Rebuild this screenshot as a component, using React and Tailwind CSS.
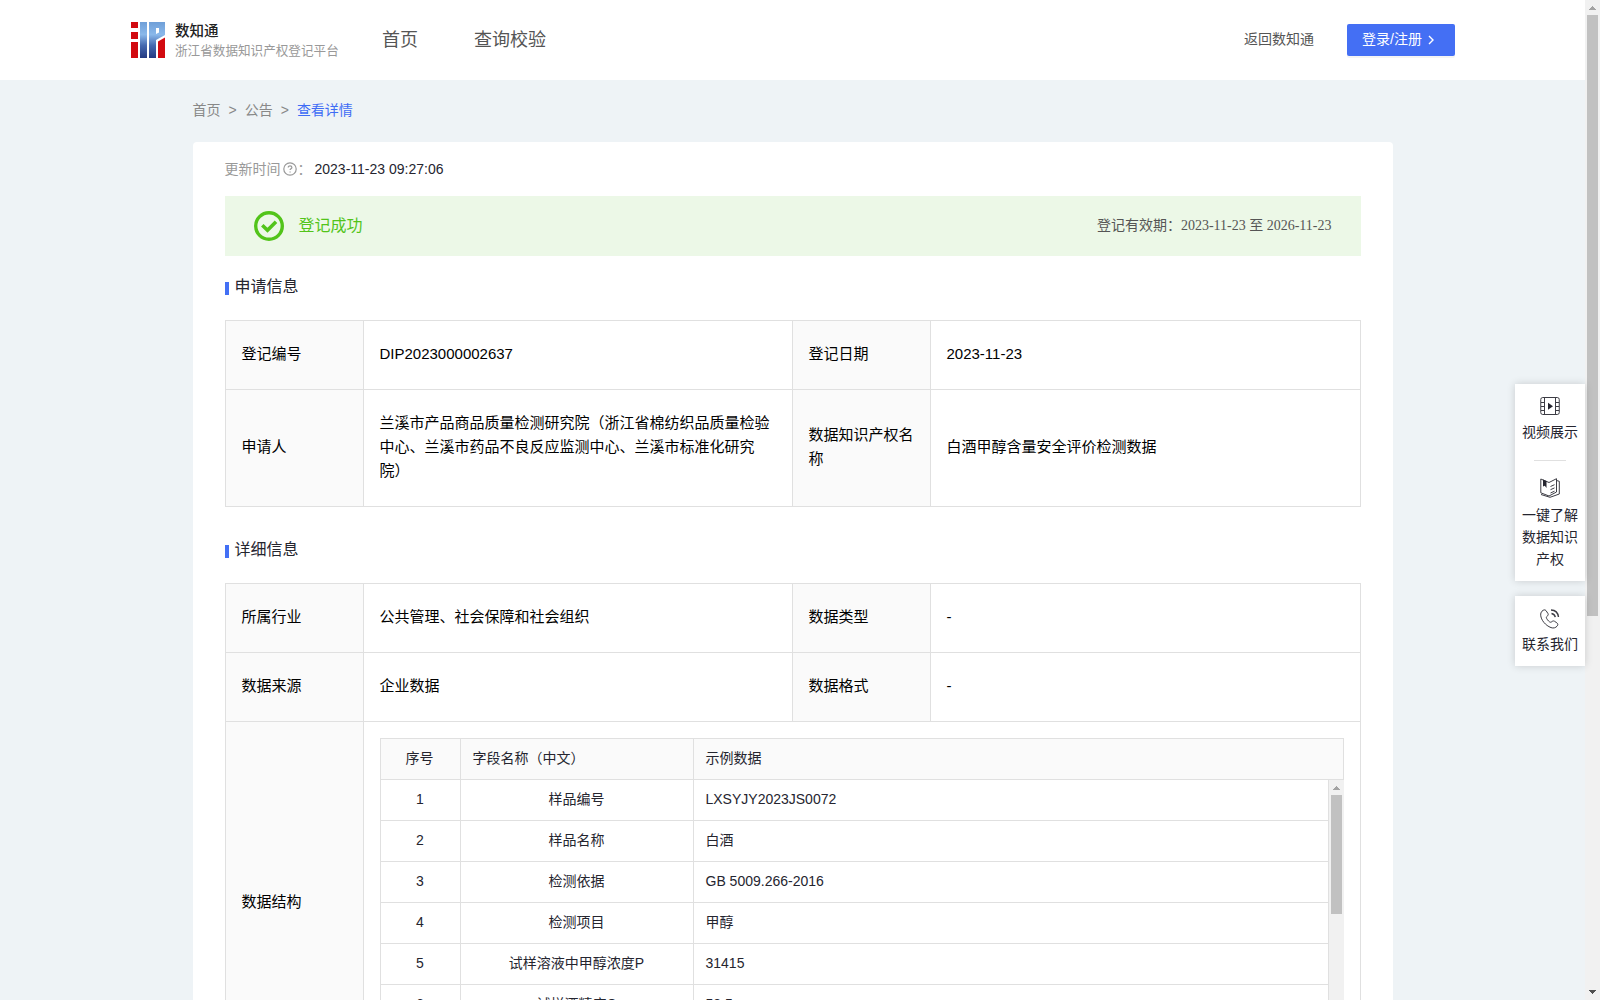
const cjk = "font-['Liberation_Sans','Noto_Sans_CJK_SC',sans-serif]";

function Logo() {
  return (
    <svg width="34" height="36" viewBox="0 0 34 36" className="shrink-0">
      <defs>
        <linearGradient id="blue" x1="0" y1="0" x2="0" y2="36" gradientUnits="userSpaceOnUse">
          <stop offset="0" stopColor="#6f9fd8" />
          <stop offset="0.35" stopColor="#8ab8ea" />
          <stop offset="0.65" stopColor="#4569b0" />
          <stop offset="1" stopColor="#243a82" />
        </linearGradient>
      </defs>
      <path d="M0 0h7v6H0zM0 10h7v7H0zM0 20h7v16H0z" fill="#d20a10" />
      <path d="M9 0h7v36H9z" fill="url(#blue)" />
      <path d="M18 0h16v13l-9 5v18h-7zM25 6v6l3-1.500V6z" fillRule="evenodd" fill="url(#blue)" />
      <path d="M27 19.500l7-4v20.500h-7z" fill="#d20a10" />
    </svg>
  );
}

function Arrow({ down = false }) {
  return (
    <svg width="15" height="15" viewBox="0 0 15 15" className="shrink-0" shapeRendering="crispEdges">
      {down ? <path d="M4 5h7L7.5 9z" fill="#505050" /> : <path d="M4 10h7L7.5 6z" fill="#a3a3a3" />}
    </svg>
  );
}

function Label({ children }) {
  return <div className="flex items-center border-r border-[#e0e0e0] bg-[#fafafa] px-4 pb-[2px]">{children}</div>;
}

function Value({ children, last = false }) {
  return <div className={"flex items-center px-4 pb-[2px] " + (last ? "" : "border-r border-[#e0e0e0]")}>{children}</div>;
}

function Row({ cells, tall = false }) {
  return (
    <div className={"grid grid-cols-[138px_429px_138px_429px] border-b border-[#e0e0e0] " + (tall ? "h-[117px]" : "h-[69px]")}>
      <Label>{cells[0]}</Label>
      <Value>{cells[1]}</Value>
      <Label>{cells[2]}</Label>
      <Value last>{cells[3]}</Value>
    </div>
  );
}

function Title({ children }) {
  return (
    <div className="flex h-6 items-center text-[16px] text-[#25252f]">
      <span className="mr-[6px] mt-[3px] h-[13px] w-1 bg-[#4370f5]" />
      {children}
    </div>
  );
}

const rows = [
  ["1", "样品编号", "LXSYJY2023JS0072"],
  ["2", "样品名称", "白酒"],
  ["3", "检测依据", "GB 5009.266-2016"],
  ["4", "检测项目", "甲醇"],
  ["5", "试样溶液中甲醇浓度P", "31415"],
  ["6", "试样酒精度C", "58.5"],
];

function Fields() {
  return (
    <div className="mx-4 mt-4 h-[330px] w-[964px] overflow-hidden text-[14px] text-[#25252f]">
      <div className="grid h-[42px] grid-cols-[80px_233px_649px] border border-[#e0e0e0] bg-[#fafafa]">
        <div className="flex items-center justify-center border-r border-[#e0e0e0] pb-[2px] pr-px">序号</div>
        <div className="flex items-center border-r border-[#e0e0e0] pb-[2px] pl-3">字段名称（中文）</div>
        <div className="flex items-center pb-[2px] pl-3">示例数据</div>
      </div>
      <div className="flex">
        <div className="w-[949px] border-x border-[#e0e0e0]">
          {rows.map(([n, name, v]) => (
            <div key={n} className="grid h-[41px] grid-cols-[80px_233px_634px] border-b border-[#e0e0e0]">
              <div className="flex items-center justify-center border-r border-[#e0e0e0] pb-[2px]">{n}</div>
              <div className="flex items-center justify-center border-r border-[#e0e0e0] pb-[2px]">{name}</div>
              <div className="flex items-center pb-[2px] pl-3">{v}</div>
            </div>
          ))}
        </div>
        <div className="flex w-[15px] flex-col items-center bg-[#f1f1f1]">
          <Arrow />
          <div className="h-[119px] w-[11px] bg-[#c1c1c1]" />
        </div>
      </div>
    </div>
  );
}

function FilmIcon() {
  return (
    <svg width="20" height="20" viewBox="0 0 20 20" fill="none" stroke="#3c3c44">
      <rect x="0.75" y="1.5" width="18.5" height="17" rx="2" />
      <path d="M4.5 1.5v17M15.5 1.500v17M1 6.500h3.500M1 10.500h3.500M1 14.500h3.500M15.500 6.500H19M15.500 10.500H19M15.500 14.500H19" />
      <path d="M8 6.700l5 3.500-5 3.500z" fill="#25252f" stroke="none" />
    </svg>
  );
}

function BookIcon() {
  return (
    <svg width="20" height="20" viewBox="0 0 20 20" fill="none" stroke="#3c3c44">
      <path d="M.8 1L9 4.500 16.500.7V14L9 18 .8 14.800z" />
      <path d="M16.500 2.500l2.800.8v12.700L10 19.300 1 16.500M10.500 8.500l4-1.800M10.500 11.700l4-1.800M10.500 15l4-1.800" />
      <path d="M3 1.500l3.500 1.500v7L4.800 7.800 3 8.500z" fill="#25252f" stroke="none" />
    </svg>
  );
}

function PhoneIcon() {
  return (
    <svg width="20" height="20" viewBox="0 0 20 20" fill="none" stroke="#3c3c44">
      <path d="M2 2.2C3.5.7 5 .4 6 1.6l2 3c.6 1.2-.1 2-1.2 2.9-.8.7-.5 1.7.7 3.3 1.4 1.8 2.7 2.8 3.7 2.3 1.3-1 2-1.5 3.2-.9l2.5 1.7c1.2.9 1.2 2 .2 3.2-1.4 1.7-3.6 2.4-6.1 1.5C5.500 16.500 1 11 .7 6.200.600 4.600 1 3.200 2 2.200z" />
      <path d="M11.500 4.500c2 .3 3.300 1.500 3.800 3.600M11 1c4 .2 7 2.800 7.500 7" strokeWidth="1.400" />
    </svg>
  );
}

export default function App() {
  return (
    <div className={"relative flex h-[1000px] w-[1600px] overflow-hidden bg-[#eef3f6] " + cjk}>
      <div className="flex w-[1585px] shrink-0 flex-col">
        <header className="flex h-20 shrink-0 items-center bg-white pl-[131px] pr-[130px] text-[#555]">
          <Logo />
          <div className="ml-[10px] w-[164px] whitespace-nowrap pt-[2px]">
            <div className="text-[14.5px] font-medium leading-5 text-[#222]">数知通</div>
            <div className="text-[12.6px] leading-[20px] text-[#999]">浙江省数据知识产权登记平台</div>
          </div>
          <nav className="ml-[43px] flex gap-14 text-[18px]">
            <span>首页</span>
            <span>查询校验</span>
          </nav>
          <span className="ml-auto pb-px text-[14px]">返回数知通</span>
          <button className="ml-[33px] flex h-8 w-[108px] items-center rounded-[2px] bg-[#446ff4] pb-px pl-[15px] text-[14px] text-white shadow-[0_2px_0_rgba(0,0,0,0.045)]">
            登录/注册
            <svg width="8" height="10" viewBox="0 0 8 10" className="ml-[5px]" fill="none" stroke="white" strokeWidth="1.4">
              <path d="M2 1l4 4-4 4" />
            </svg>
          </button>
        </header>
        <main className="mx-auto w-[1200px]">
          <div className="flex h-[62px] items-center gap-2 pb-px text-[14px] text-[#888]">
            <span>首页</span>
            <span>&gt;</span>
            <span>公告</span>
            <span>&gt;</span>
            <span className="text-[#3f6cf5]">查看详情</span>
          </div>
          <section className="h-[960px] rounded bg-white px-8">
            <div className="flex h-[54px] items-center text-[14px] text-[#999]">
              更新时间
              <svg width="14" height="14" viewBox="0 0 14 14" className="ml-[2px]" fill="none" stroke="#999" strokeWidth="1.2">
                <circle cx="7" cy="7" r="6.2" />
                <path d="M5.200 5.600c0-2.300 3.700-2.300 3.700 0 0 1.200-1.800 1.300-1.800 2.500M7.100 9.400v1.200" />
              </svg>
              <span className="w-4 pl-px">：</span>
              <span className="ml-[2px] text-[14px] text-[#25252f]">2023-11-23 09:27:06</span>
            </div>
            <div className="flex h-[60px] items-center bg-[#ecf8e7] px-[29px]">
              <svg width="30" height="30" viewBox="0 0 30 30" fill="none" stroke="#52c41a">
                <circle cx="15" cy="15" r="13.3" strokeWidth="3.400" />
                <path d="M8.300 14.200l5.200 5L22 10.700" strokeWidth="3.600" />
              </svg>
              <span className="ml-[15px] text-[16px] text-[#52c41a]">登记成功</span>
              <span className="ml-auto whitespace-pre pb-[2px] font-['Liberation_Serif','Noto_Sans_CJK_SC',serif] text-[14px] text-[#555]">登记有效期：2023-11-23 至 2026-11-23</span>
            </div>
            <div className="mt-[19px]"><Title>申请信息</Title></div>
            <div className="mt-[21px] border border-b-0 border-[#e0e0e0] text-[15px] leading-6 text-black">
              <Row cells={["登记编号", "DIP2023000002637", "登记日期", "2023-11-23"]} />
              <Row tall cells={["申请人", "兰溪市产品商品质量检测研究院（浙江省棉纺织品质量检验中心、兰溪市药品不良反应监测中心、兰溪市标准化研究院）", "数据知识产权名称", "白酒甲醇含量安全评价检测数据"]} />
            </div>
            <div className="mt-[31px]"><Title>详细信息</Title></div>
            <div className="mt-[21px] border border-[#e0e0e0] text-[15px] leading-6 text-black">
              <Row cells={["所属行业", "公共管理、社会保障和社会组织", "数据类型", "-"]} />
              <Row cells={["数据来源", "企业数据", "数据格式", "-"]} />
              <div className="grid h-[362px] grid-cols-[138px_996px]">
                <Label>数据结构</Label>
                <Fields />
              </div>
            </div>
          </section>
        </main>
      </div>
      <div className="flex w-[15px] flex-col items-center justify-between bg-[#f1f1f1]">
        <div className="flex flex-col items-center">
          <Arrow />
          <div className="h-[601px] w-[11px] bg-[#c1c1c1]" />
        </div>
        <Arrow down />
      </div>
      <aside className="absolute right-[15px] top-[384px] w-[70px] text-center text-[14px] leading-[22px] text-[#25252f]">
        <div className="flex h-[197px] flex-col items-center bg-white pt-3 shadow-[0_0_8px_rgba(0,0,0,0.16)]">
          <FilmIcon />
          <div className="mt-[5px]">视频展示</div>
          <div className="mt-[17px] h-px w-8 bg-[#e0e0e0]" />
          <div className="mt-[17px]"><BookIcon /></div>
          <div className="mt-[6px] w-14">一键了解数据知识产权</div>
        </div>
        <div className="mt-[15px] flex h-[70px] flex-col items-center bg-white pt-[13px] shadow-[0_0_8px_rgba(0,0,0,0.16)]">
          <PhoneIcon />
          <div className="mt-[4px]">联系我们</div>
        </div>
      </aside>
    </div>
  );
}
